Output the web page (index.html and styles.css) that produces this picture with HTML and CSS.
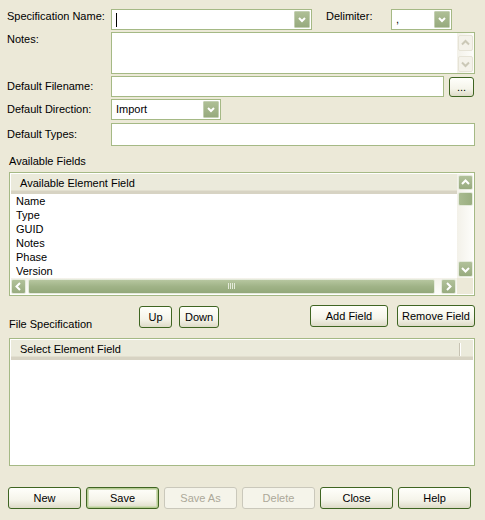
FILE: index.html
```html
<!DOCTYPE html>
<html lang="en">
<head>
    <meta charset="UTF-8">
    <title>Import/Export Specification</title>
    <link rel="stylesheet" href="styles.css">
</head>
<body>
    <div class="dialog">
        <!-- Cabecera del formulario -->
        <div class="form-row row-spec">
            <span class="form-label label-top">Specification Name:</span>
            <div class="combo combo-spec">
                <span class="combo-text"><span class="caret"></span></span>
                <span class="drop-button">
                    <svg width="16" height="17" viewBox="0 0 16 17"><polyline points="5,7 8,10 11,7" fill="none" stroke="#fff" stroke-width="2"/></svg>
                </span>
            </div>
            <span class="delim-label label-top">Delimiter:</span>
            <div class="combo combo-delim">
                <span class="combo-text">,</span>
                <span class="drop-button">
                    <svg width="16" height="17" viewBox="0 0 16 17"><polyline points="5,7 8,10 11,7" fill="none" stroke="#fff" stroke-width="2"/></svg>
                </span>
            </div>
        </div>

        <div class="form-row row-notes">
            <span class="form-label label-notes">Notes:</span>
            <div class="notes-box">
                <div class="vscroll vscroll-off">
                    <span class="sb-arrow sb-arrow-off">
                        <svg width="13" height="14" viewBox="0 0 13 14"><polyline points="3,8.5 6.5,5 10,8.5" fill="none" stroke="#cbc8b7" stroke-width="2"/></svg>
                    </span>
                    <span class="sb-arrow sb-arrow-off">
                        <svg width="13" height="14" viewBox="0 0 13 14"><polyline points="3,5.5 6.5,9 10,5.5" fill="none" stroke="#cbc8b7" stroke-width="2"/></svg>
                    </span>
                </div>
            </div>
        </div>

        <div class="form-row row-filename">
            <span class="form-label">Default Filename:</span>
            <div class="text-input input-filename"></div>
            <button class="xp-button browse-button">...</button>
        </div>

        <div class="form-row row-direction">
            <span class="form-label">Default Direction:</span>
            <div class="combo combo-direction">
                <span class="combo-text">Import</span>
                <span class="drop-button">
                    <svg width="16" height="17" viewBox="0 0 16 17"><polyline points="5,7 8,10 11,7" fill="none" stroke="#fff" stroke-width="2"/></svg>
                </span>
            </div>
        </div>

        <div class="form-row row-types">
            <span class="form-label">Default Types:</span>
            <div class="text-input input-types"></div>
        </div>

        <!-- Campos disponibles -->
        <div class="section-label">Available Fields</div>
        <div class="list-box">
            <div class="list-main">
                <div class="list-header"><span class="header-text">Available Element Field</span></div>
                <div class="list-rows">
                    <div class="list-row">Name</div>
                    <div class="list-row">Type</div>
                    <div class="list-row">GUID</div>
                    <div class="list-row">Notes</div>
                    <div class="list-row">Phase</div>
                    <div class="list-row">Version</div>
                </div>
            </div>
            <div class="vscroll list-vscroll">
                <span class="sb-arrow">
                    <svg width="13" height="13" viewBox="0 0 13 13"><polyline points="3,8 6.5,4.5 10,8" fill="none" stroke="#fff" stroke-width="2"/></svg>
                </span>
                <span class="sb-thumb-v"></span>
                <span class="sb-arrow sb-arrow-bottom">
                    <svg width="13" height="13" viewBox="0 0 13 13"><polyline points="3,5 6.5,8.5 10,5" fill="none" stroke="#fff" stroke-width="2"/></svg>
                </span>
            </div>
            <div class="hscroll">
                <span class="sb-arrow">
                    <svg width="13" height="13" viewBox="0 0 13 13"><polyline points="8,3 4.5,6.5 8,10" fill="none" stroke="#fff" stroke-width="2"/></svg>
                </span>
                <span class="sb-thumb-h"><span class="grip"></span></span>
                <span class="sb-arrow sb-arrow-end">
                    <svg width="13" height="13" viewBox="0 0 13 13"><polyline points="5,3 8.5,6.5 5,10" fill="none" stroke="#fff" stroke-width="2"/></svg>
                </span>
            </div>
            <div class="scroll-corner"></div>
        </div>

        <!-- Especificacion del archivo -->
        <div class="spec-toolbar">
            <span class="spec-label">File Specification</span>
            <button class="xp-button small-button up-button">Up</button>
            <button class="xp-button small-button down-button">Down</button>
            <button class="xp-button field-button add-button">Add Field</button>
            <button class="xp-button field-button remove-button">Remove Field</button>
        </div>
        <div class="spec-box">
            <div class="list-header spec-header">
                <span class="header-text">Select Element Field</span>
                <span class="header-divider"></span>
            </div>
        </div>

        <!-- Botones inferiores -->
        <div class="bottom-bar">
            <button class="xp-button bar-button">New</button>
            <button class="xp-button bar-button default-button">Save</button>
            <button class="xp-button bar-button" disabled>Save As</button>
            <button class="xp-button bar-button" disabled>Delete</button>
            <button class="xp-button bar-button">Close</button>
            <button class="xp-button bar-button">Help</button>
        </div>
    </div>
</body>
</html>
```

FILE: styles.css
```css
/* Ventana general */
body {
    margin: 0;
    background-color: #ece9d8;
    font-family: "Liberation Sans", Arial, sans-serif;
    font-size: 11px;
    line-height: 13px;
    color: #000;
}

.dialog {
    width: 485px;
    height: 520px;
    box-sizing: border-box;
    padding-top: 9px;
}

/* Filas del formulario */
.form-row {
    display: flex;
    align-items: center;
    margin-left: 7px;
}

.form-label {
    width: 104px;
    flex-shrink: 0;
}

.label-top {
    align-self: flex-start;
    margin-top: 1px;
}

.label-notes {
    align-self: flex-start;
    margin-top: 1px;
}

.row-notes { margin-top: 2px; }
.row-filename { margin-top: 2px; }
.row-direction { margin-top: 2px; }
.row-types { margin-top: 3px; }

.delim-label {
    width: 65px;
    margin-left: 14px;
}

/* Combos */
.combo {
    height: 21px;
    box-sizing: border-box;
    border: 1px solid #a5b985;
    background-color: #fff;
    display: flex;
    align-items: center;
    justify-content: space-between;
    padding: 1px;
}

.combo-spec { width: 201px; }
.combo-delim { width: 61px; }
.combo-direction { width: 110px; }

.combo-text {
    padding-left: 3px;
    display: flex;
    align-items: center;
}

.caret {
    display: inline-block;
    width: 1px;
    height: 14px;
    background-color: #000;
}

.drop-button {
    width: 16px;
    height: 17px;
    box-sizing: border-box;
    border: 1px solid #c3cfb2;
    border-radius: 1px;
    background: linear-gradient(to bottom, #aebf95, #97aa7e);
    display: flex;
    align-items: center;
    justify-content: center;
}

.drop-button svg {
    margin: -1px;
}

/* Cajas de texto */
.text-input,
.notes-box {
    box-sizing: border-box;
    border: 1px solid #a5b985;
    background-color: #fff;
}

.notes-box {
    width: 364px;
    height: 42px;
    display: flex;
    justify-content: flex-end;
}

.input-filename {
    width: 333px;
    height: 21px;
}

.input-types {
    width: 364px;
    height: 23px;
}

/* Barras de desplazamiento */
.vscroll {
    width: 17px;
    box-sizing: border-box;
    display: flex;
    flex-direction: column;
    align-items: center;
    background: linear-gradient(to right, #f3f1e9, #fdfdfa);
}

.vscroll-off {
    justify-content: space-between;
    padding: 2px 0 1px;
}

.sb-arrow {
    width: 15px;
    height: 15px;
    box-sizing: border-box;
    border: 1px solid #e4eadb;
    border-radius: 2px;
    background: linear-gradient(to bottom, #b1c19a, #98ab7f);
    display: flex;
    align-items: center;
    justify-content: center;
}

.sb-arrow-off {
    width: 15px;
    height: 16px;
    border-color: #e6e3d6;
    background: #f4f2ea;
}

.list-vscroll {
    grid-column: 2;
    grid-row: 1;
    width: 16px;
    padding-top: 1px;
}

.sb-thumb-v {
    width: 15px;
    height: 14px;
    margin-top: 2px;
    box-sizing: border-box;
    border: 1px solid #e4eadb;
    border-radius: 2px;
    background: linear-gradient(to right, #a9bb90, #9aae80);
}

.sb-arrow-bottom {
    margin-top: auto;
    margin-bottom: 1px;
    height: 16px;
}

.hscroll {
    grid-column: 1;
    grid-row: 2;
    display: flex;
    align-items: center;
    background: linear-gradient(to bottom, #f3f1e9, #fdfdfa);
}

.sb-thumb-h {
    width: 407px;
    height: 15px;
    margin-left: 2px;
    box-sizing: border-box;
    border: 1px solid #e4eadb;
    border-radius: 2px;
    background: linear-gradient(to bottom, #b6c69f, #a0b387 50%, #93a87a);
    display: flex;
    align-items: center;
    justify-content: center;
}

.grip {
    width: 7px;
    height: 6px;
    background: repeating-linear-gradient(to right, #e4ead9 0, #e4ead9 1px, transparent 1px, transparent 2px);
}

.sb-arrow-end {
    margin-left: auto;
    margin-right: 1px;
}

.scroll-corner {
    grid-column: 2;
    grid-row: 2;
    background-color: #ece9d8;
}

/* Lista de campos disponibles */
.section-label {
    margin: 9px 0 0 9px;
}

.list-box {
    margin: 4px 0 0 9px;
    width: 466px;
    height: 124px;
    box-sizing: border-box;
    border: 1px solid #a5b985;
    padding: 1px;
    background-color: #fff;
    display: grid;
    grid-template-columns: 1fr 16px;
    grid-template-rows: 1fr 16px;
}

.list-main {
    grid-column: 1;
    grid-row: 1;
    overflow: hidden;
}

.list-header {
    height: 20px;
    box-sizing: border-box;
    background-color: #ebeadb;
    border-bottom: 3px solid #d7d3c3;
    box-shadow: inset 0 -1px 0 #e2dfcf;
    display: flex;
    align-items: center;
    position: relative;
}

.header-text {
    padding-left: 9px;
    margin-top: 2px;
}

.list-row {
    height: 14px;
    line-height: 14px;
    padding-left: 5px;
}

/* Barra de especificacion */
.spec-toolbar {
    display: flex;
    align-items: flex-start;
    margin: 9px 0 0 9px;
    height: 26px;
}

.spec-label {
    width: 130px;
    margin-top: 13px;
}

.spec-box {
    margin: 7px 0 0 9px;
    width: 466px;
    height: 128px;
    box-sizing: border-box;
    border: 1px solid #a5b985;
    padding: 1px;
    background-color: #fff;
}

.header-divider {
    position: absolute;
    left: 448px;
    top: 3px;
    width: 1px;
    height: 13px;
    background-color: #c7c3b3;
    box-shadow: 1px 0 0 #fff;
}

/* Botones estilo XP */
.xp-button {
    font-family: "Liberation Sans", Arial, sans-serif;
    font-size: 11px;
    color: #000;
    height: 22px;
    box-sizing: border-box;
    border: 1px solid #3f6522;
    border-radius: 3px;
    background: linear-gradient(to bottom, #fffffb 0%, #f5f4ea 60%, #dedbc8 100%);
    padding: 0;
    cursor: pointer;
}

.xp-button:disabled {
    border-color: #cac8bb;
    background: #f5f4ea;
    color: #aca899;
}

.browse-button {
    width: 25px;
    height: 20px;
    margin-left: 5px;
}

.small-button {
    margin-top: 1px;
}

.up-button { width: 33px; }

.down-button {
    width: 40px;
    margin-left: 7px;
}

.field-button { width: 78px; }

.add-button { margin-left: auto; }

.remove-button {
    margin-left: 9px;
    margin-right: 10px;
}

.default-button {
    box-shadow: inset 0 0 0 1px #b6cb92, inset 0 0 0 2px #cfdcb6;
}

/* Barra inferior */
.bottom-bar {
    display: flex;
    gap: 5px;
    margin: 21px 0 0 8px;
}

.bar-button {
    width: 73px;
}
```
